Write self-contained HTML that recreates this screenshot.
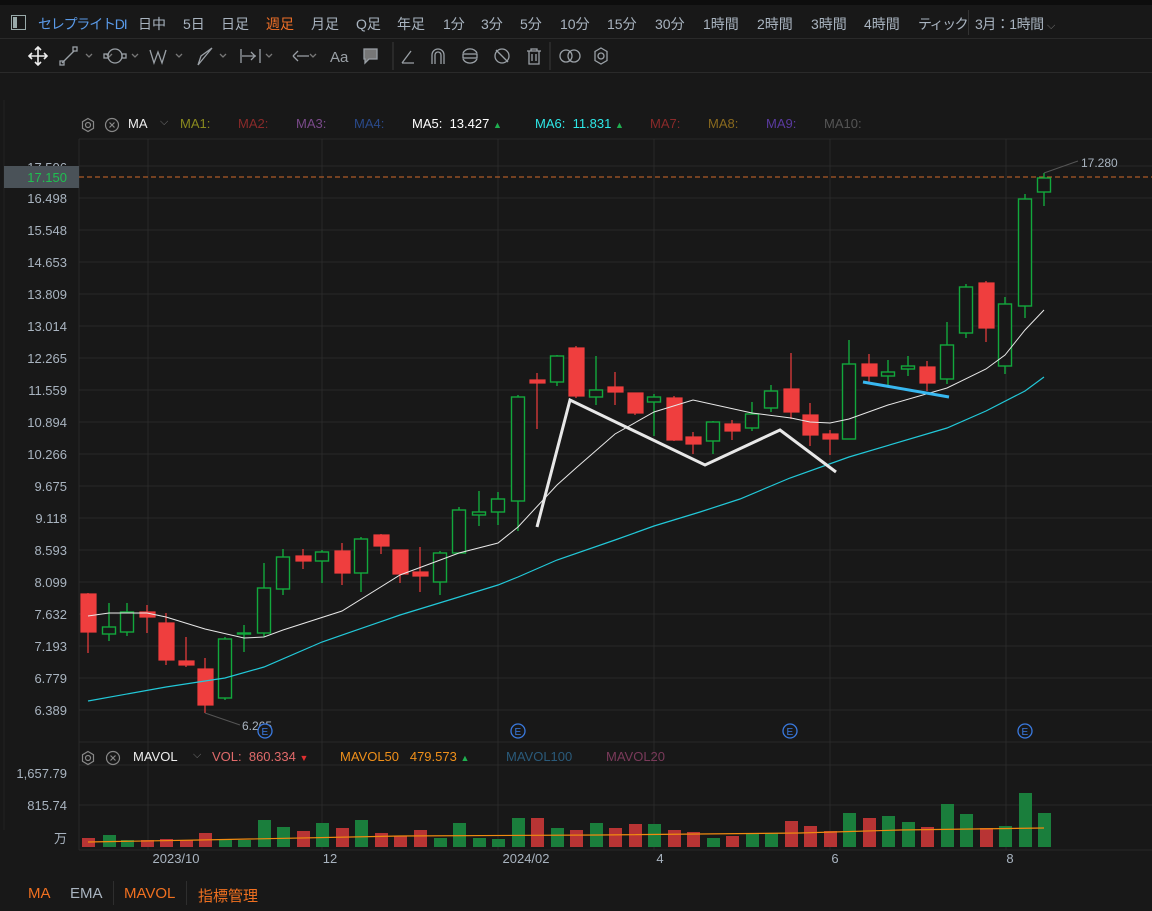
<!DOCTYPE html>
<html><head><meta charset="utf-8"><style>
*{margin:0;padding:0;box-sizing:border-box}
body{width:1152px;height:911px;background:#181818;overflow:hidden;font-family:"Liberation Sans","Noto Sans CJK JP",sans-serif;position:relative;color:#a9b4c0}
.t{position:absolute;white-space:nowrap}
</style></head><body>
<div style="position:absolute;left:0;top:0;width:1152px;height:5px;background:#0d0d0d"></div>
<div style="position:absolute;left:0;top:38px;width:1152px;height:1px;background:#2a2a2a"></div>
<div style="position:absolute;left:0;top:72px;width:1152px;height:1px;background:#2a2a2a"></div>
<div style="position:absolute;left:968px;top:10px;width:1px;height:25px;background:#333"></div>
<div style="position:absolute;left:11px;top:15px;width:15px;height:15px;border:1.5px solid #9aa;"></div>
<div style="position:absolute;left:13px;top:17px;width:4px;height:11px;background:#9aa"></div>
<div style="font-size:14px;top:14px;left:0;position:absolute;width:1152px;height:20px">
<span class="t" style="left:38px;color:#5a9ae8;letter-spacing:-1.2px">セレプライトDI</span>
<span class="t" style="left:138px">日中</span><span class="t" style="left:183px">5日</span><span class="t" style="left:221px">日足</span>
<span class="t" style="left:266px;color:#f07028">週足</span><span class="t" style="left:311px">月足</span><span class="t" style="left:356px">Q足</span>
<span class="t" style="left:397px">年足</span><span class="t" style="left:443px">1分</span><span class="t" style="left:481px">3分</span><span class="t" style="left:520px">5分</span>
<span class="t" style="left:560px">10分</span><span class="t" style="left:607px">15分</span><span class="t" style="left:655px">30分</span><span class="t" style="left:703px">1時間</span>
<span class="t" style="left:757px">2時間</span><span class="t" style="left:811px">3時間</span><span class="t" style="left:864px">4時間</span><span class="t" style="left:918px;letter-spacing:-1.5px">ティック</span>
<span class="t" style="left:975px;letter-spacing:-0.5px">3月：1時間 <span style="color:#777;font-size:11px">⌵</span></span>
</div>
<svg style="position:absolute;left:0;top:40px" width="640" height="32" fill="none" stroke="#9aa0a6" stroke-width="1.3">
<path d="M38 7v18M29 16h18M35 10l3-3 3 3M35 22l3 3 3-3M32 13l-3 3 3 3M44 13l3 3-3 3" stroke="#eee" stroke-width="1.6"/>
<path d="M62 23l12-12"/><rect x="60" y="21" width="4" height="4"/><rect x="73" y="7" width="4" height="4"/>
<path d="M86 14l3 3 3-3M106 14l3 3 3-3M132 14l3 3 3-3M176 14l3 3 3-3M220 14l3 3 3-3M266 14l3 3 3-3M310 14l3 3 3-3" stroke="#777"/>
<circle cx="115" cy="16" r="7"/><rect x="104" y="14" width="4" height="4"/><rect x="122" y="14" width="4" height="4"/>
<path d="M150 10l4 13 4-11 4 11 4-13"/><path d="M198 25l3-9 11-8z"/>
<path d="M241 9v14M242 16h14M260 9v14M251 12l4 4-4 4" /><path d="M297 16h12M293 16l5-5M293 16l5 5"/>
<text x="330" y="22" fill="#9aa0a6" stroke="none" font-size="15" font-family="Liberation Sans">Aa</text>
<path d="M364 9h13v10h-8l-4 4v-4h-1z" fill="#777"/>
<path d="M393 2v28" stroke="#333"/>
<path d="M402 23h12M402 23l9-12"/><path d="M432 24v-9a6 6 0 0 1 12 0v9M435 24v-9a3 3 0 0 1 6 0v9"/>
<path d="M463 13a8 8 0 0 1 14 0M477 19a8 8 0 0 1-14 0"/><rect x="463" y="14" width="14" height="4"/>
<circle cx="502" cy="16" r="7"/><path d="M496 10l12 12"/>
<path d="M527 11h14M531 11v-2h6v2M529 11v13h10v-13M532 14v7M536 14v7"/>
<path d="M550 2v28" stroke="#333"/>
<circle cx="566" cy="16" r="6"/><circle cx="574" cy="16" r="6"/>
<circle cx="601" cy="16" r="3"/><path d="M601 8l6 3.5v9l-6 3.5-6-3.5v-9z"/>
</svg>
<div style="font-size:13px;position:absolute;left:0;top:116px;width:1152px;height:18px">
<svg class="t" style="left:80px;top:1px" width="44" height="16" fill="none" stroke="#888" stroke-width="1.2"><circle cx="8" cy="8" r="2.5"/><path d="M8 1.5l5.5 3.2v6.6L8 14.5 2.5 11.3V4.7z"/><circle cx="32" cy="8" r="6.5"/><path d="M29.5 5.5l5 5M34.5 5.5l-5 5"/></svg>
<span class="t" style="left:128px;color:#eee">MA</span><span class="t" style="left:160px;color:#777;font-size:11px">⌵</span>
<span class="t" style="left:180px;color:#8a8a1e">MA1:</span><span class="t" style="left:238px;color:#8a2a2a">MA2:</span>
<span class="t" style="left:296px;color:#7a4a8a">MA3:</span><span class="t" style="left:354px;color:#2a4a8a">MA4:</span>
<span class="t" style="left:412px;color:#fff">MA5:&nbsp; 13.427 <span style="color:#1fb050;font-size:9px">▲</span></span>
<span class="t" style="left:535px;color:#2ee8e8">MA6:&nbsp; 11.831 <span style="color:#1fb050;font-size:9px">▲</span></span>
<span class="t" style="left:650px;color:#8a2a2a">MA7:</span><span class="t" style="left:708px;color:#8a6a1e">MA8:</span>
<span class="t" style="left:766px;color:#5a3aa0">MA9:</span><span class="t" style="left:824px;color:#555">MA10:</span>
</div>
<svg style="position:absolute;left:0;top:0" width="1152" height="911">
<g stroke="#292929" stroke-width="1">
<path d="M79 139h1073M79 166h1073M79 198h1073M79 230h1073M79 262h1073M79 294h1073M79 326h1073M79 358h1073M79 390h1073M79 422h1073M79 454h1073M79 486h1073M79 518h1073M79 550h1073M79 582h1073M79 614h1073M79 646h1073M79 678h1073M79 710h1073M79 742h1073"/>
<path d="M79 139v711M148 139v711M322 139v711M498 139v711M654 139v711M830 139v711M1006 139v711"/>
<path d="M79 765h1073M79 805h1073M79 850h1073"/>
<path d="M4 100v730" stroke="#222"/>
</g>
<path d="M79 177h1073" stroke="#d06a2a" stroke-dasharray="5,3"/>
<g font-size="13" fill="#a9b4c0" text-anchor="end" font-family="Liberation Sans">
<text x="67" y="172">17.506</text><text x="67" y="203">16.498</text><text x="67" y="235">15.548</text><text x="67" y="267">14.653</text><text x="67" y="299">13.809</text><text x="67" y="331">13.014</text><text x="67" y="363">12.265</text><text x="67" y="395">11.559</text><text x="67" y="427">10.894</text><text x="67" y="459">10.266</text><text x="67" y="491">9.675</text><text x="67" y="523">9.118</text><text x="67" y="555">8.593</text><text x="67" y="587">8.099</text><text x="67" y="619">7.632</text><text x="67" y="651">7.193</text><text x="67" y="683">6.779</text><text x="67" y="715">6.389</text>
<text x="67" y="778">1,657.79</text><text x="67" y="810">815.74</text><text x="67" y="843">万</text>
</g>
<rect x="4" y="166" width="75" height="22" fill="#4a5258"/>
<text x="67" y="182" fill="#1fc050" font-size="13" text-anchor="end" font-family="Liberation Sans">17.150</text>
<g font-size="13" fill="#a9b4c0" text-anchor="middle" font-family="Liberation Sans">
<text x="176" y="863">2023/10</text><text x="330" y="863">12</text><text x="526" y="863">2024/02</text><text x="660" y="863">4</text><text x="835" y="863">6</text><text x="1010" y="863">8</text>
</g>
<g stroke="#ef3e3e" fill="#ef3e3e" stroke-width="1.2">
<path d="M88 593v60M147 605v28M166 613v52M186 637v30M205 658v55M303 549v20M342 543v42M381 534v20M400 550v33M420 547v45M537 373v56M576 346v52M615 372v33M635 393v22M674 396v45M693 432v22M732 420v20M791 353v66M810 403v43M830 430v25M869 354v28M927 361v30M986 281v61"/>
<rect x="81" y="594" width="15" height="38"/><rect x="140" y="612" width="15" height="5"/><rect x="159" y="623" width="15" height="37"/><rect x="179" y="661" width="15" height="4"/><rect x="198" y="669" width="15" height="36"/>
<rect x="296" y="556" width="15" height="5"/><rect x="335" y="551" width="15" height="22"/><rect x="374" y="535" width="15" height="11"/><rect x="393" y="550" width="15" height="24"/><rect x="413" y="572" width="15" height="4"/>
<rect x="530" y="380" width="15" height="3"/><rect x="569" y="348" width="15" height="48"/><rect x="608" y="387" width="15" height="5"/><rect x="628" y="393" width="15" height="20"/><rect x="667" y="398" width="15" height="42"/><rect x="686" y="437" width="15" height="7"/><rect x="725" y="424" width="15" height="7"/><rect x="784" y="389" width="15" height="23"/><rect x="803" y="415" width="15" height="20"/><rect x="823" y="434" width="15" height="5"/><rect x="862" y="364" width="15" height="12"/><rect x="920" y="367" width="15" height="16"/><rect x="979" y="283" width="15" height="45"/>
</g>
<g stroke="#12a83c" fill="#181818" stroke-width="1.4">
<path d="M109 603v38M127 603v33M225 637v63M244 625v27M264 563v74M283 549v46M322 550v33M361 537v55M440 551v44M459 507v46M479 491v35M498 492v33M518 395v136M557 355v31M596 356v49M654 394v42M713 421v33M752 402v29M771 385v27M849 340v99M888 360v25M908 356v20M947 322v62M966 284v54M1005 297v77M1025 194v124M1044 173v33"/>
<rect x="102.5" y="627" width="13" height="7"/><rect x="120.5" y="612" width="13" height="20"/><rect x="218.5" y="639" width="13" height="59"/><rect x="237.5" y="633" width="13" height="1"/><rect x="257.5" y="588" width="13" height="45"/><rect x="276.5" y="557" width="13" height="32"/><rect x="315.5" y="552" width="13" height="9"/><rect x="354.5" y="539" width="13" height="34"/><rect x="433.5" y="553" width="13" height="29"/><rect x="452.5" y="510" width="13" height="43"/><rect x="472.5" y="512" width="13" height="3"/><rect x="491.5" y="499" width="13" height="13"/><rect x="511.5" y="397" width="13" height="104"/><rect x="550.5" y="356" width="13" height="26"/>
<rect x="589.5" y="390" width="13" height="7"/><rect x="647.5" y="397" width="13" height="5"/><rect x="706.5" y="422" width="13" height="19"/><rect x="745.5" y="414" width="13" height="14"/><rect x="764.5" y="391" width="13" height="17"/><rect x="842.5" y="364" width="13" height="75"/><rect x="881.5" y="372" width="13" height="4"/><rect x="901.5" y="366" width="13" height="3"/><rect x="940.5" y="345" width="13" height="34"/><rect x="959.5" y="287" width="13" height="46"/><rect x="998.5" y="304" width="13" height="62"/><rect x="1018.5" y="199" width="13" height="107"/><rect x="1037.5" y="178" width="13" height="14"/>
</g>
<polyline fill="none" stroke="#e8e8e8" stroke-width="1" points="88,616 109,613 147,613 166,617 205,629 244,638 264,637 283,630 342,611 400,575 459,553 498,543 518,527 557,485 576,468 615,434 654,412 693,400 752,413 791,418 810,422 830,423 849,419 888,405 947,388 986,369 1005,355 1025,330 1044,310"/>
<polyline fill="none" stroke="#22c8d8" stroke-width="1.2" points="88,701 166,687 205,681 225,678 264,667 322,642 400,615 459,597 498,585 518,577 557,560 615,540 654,526 700,512 740,499 790,478 849,457 947,428 986,411 1025,391 1044,377"/>
<polyline fill="none" stroke="#e8e8e8" stroke-width="3" points="537,527 570,400 705,465 780,430 836,472"/>
<path d="M863 382L949 397" stroke="#38b8f0" stroke-width="3"/>
<path d="M205 713L240 725M1044 173L1078 161" stroke="#555" stroke-width="1"/>
<text x="242" y="730" font-size="12" fill="#a9b4c0" font-family="Liberation Sans">6.265</text>
<text x="1081" y="167" font-size="12" fill="#a9b4c0" font-family="Liberation Sans">17.280</text>
<g fill="#181818" stroke="#3a7ae0" stroke-width="1.3" font-size="10" font-family="Liberation Sans">
<circle cx="518" cy="731" r="7"/><circle cx="790" cy="731" r="7"/><circle cx="1025" cy="731" r="7"/><circle cx="265" cy="731" r="7"/>
<text x="514.5" y="735" fill="#3a7ae0" stroke="none">E</text><text x="786.5" y="735" fill="#3a7ae0" stroke="none">E</text><text x="1021.5" y="735" fill="#3a7ae0" stroke="none">E</text><text x="261.5" y="735" fill="#3a7ae0" stroke="none">E</text>
</g>
<g fill="#b83434">
<rect x="82" y="838" width="13" height="9"/><rect x="141" y="840" width="13" height="7"/><rect x="160" y="839" width="13" height="8"/><rect x="180" y="840" width="13" height="7"/><rect x="199" y="833" width="13" height="14"/>
<rect x="297" y="831" width="13" height="16"/><rect x="336" y="828" width="13" height="19"/><rect x="375" y="833" width="13" height="14"/><rect x="394" y="836" width="13" height="11"/><rect x="414" y="830" width="13" height="17"/>
<rect x="531" y="818" width="13" height="29"/><rect x="570" y="830" width="13" height="17"/><rect x="609" y="828" width="13" height="19"/><rect x="629" y="824" width="13" height="23"/><rect x="668" y="830" width="13" height="17"/><rect x="687" y="832" width="13" height="15"/><rect x="726" y="836" width="13" height="11"/><rect x="785" y="821" width="13" height="26"/><rect x="804" y="826" width="13" height="21"/><rect x="824" y="831" width="13" height="16"/><rect x="863" y="818" width="13" height="29"/><rect x="921" y="827" width="13" height="20"/><rect x="980" y="828" width="13" height="19"/>
</g>
<g fill="#1a7e3c">
<rect x="103" y="835" width="13" height="12"/><rect x="121" y="840" width="13" height="7"/><rect x="219" y="840" width="13" height="7"/><rect x="238" y="840" width="13" height="7"/><rect x="258" y="820" width="13" height="27"/><rect x="277" y="827" width="13" height="20"/><rect x="316" y="823" width="13" height="24"/><rect x="355" y="820" width="13" height="27"/><rect x="434" y="838" width="13" height="9"/><rect x="453" y="823" width="13" height="24"/><rect x="473" y="838" width="13" height="9"/><rect x="492" y="839" width="13" height="8"/><rect x="512" y="818" width="13" height="29"/><rect x="551" y="828" width="13" height="19"/>
<rect x="590" y="823" width="13" height="24"/><rect x="648" y="824" width="13" height="23"/><rect x="707" y="838" width="13" height="9"/><rect x="746" y="833" width="13" height="14"/><rect x="765" y="833" width="13" height="14"/><rect x="843" y="813" width="13" height="34"/><rect x="882" y="816" width="13" height="31"/><rect x="902" y="822" width="13" height="25"/><rect x="941" y="804" width="13" height="43"/><rect x="960" y="814" width="13" height="33"/><rect x="999" y="826" width="13" height="21"/><rect x="1019" y="793" width="13" height="54"/><rect x="1038" y="813" width="13" height="34"/>
</g>
<polyline fill="none" stroke="#f08a10" stroke-width="1.2" points="88,842 200,840 400,836 600,835 800,833 900,830 1044,828"/>
</svg>
<div style="font-size:13px;position:absolute;left:0;top:749px;width:1152px;height:18px">
<svg class="t" style="left:80px;top:1px" width="44" height="16" fill="none" stroke="#888" stroke-width="1.2"><circle cx="8" cy="8" r="2.5"/><path d="M8 1.5l5.5 3.2v6.6L8 14.5 2.5 11.3V4.7z"/><circle cx="33" cy="8" r="6.5"/><path d="M30.5 5.5l5 5M35.5 5.5l-5 5"/></svg>
<span class="t" style="left:133px;color:#eee">MAVOL</span><span class="t" style="left:193px;color:#777;font-size:11px">⌵</span>
<span class="t" style="left:212px;color:#e06a6a">VOL:&nbsp; 860.334 <span style="color:#e03030;font-size:9px">▼</span></span>
<span class="t" style="left:340px;color:#f0901a">MAVOL50&nbsp;&nbsp; 479.573 <span style="color:#1fb050;font-size:9px">▲</span></span>
<span class="t" style="left:506px;color:#2a5a7a">MAVOL100</span><span class="t" style="left:606px;color:#7a3a5a">MAVOL20</span>
</div>
<div style="position:absolute;left:0;top:885px;width:1152px;height:24px;font-size:15px">
<span class="t" style="left:28px;color:#f07020">MA</span><span class="t" style="left:70px;color:#a9b4c0">EMA</span>
<span class="t" style="left:113px;top:-4px;width:1px;height:24px;background:#2e2e2e"></span>
<span class="t" style="left:124px;color:#f07020">MAVOL</span>
<span class="t" style="left:186px;top:-4px;width:1px;height:24px;background:#2e2e2e"></span>
<span class="t" style="left:198px;color:#f07020">指標管理</span>
</div>
</body></html>
